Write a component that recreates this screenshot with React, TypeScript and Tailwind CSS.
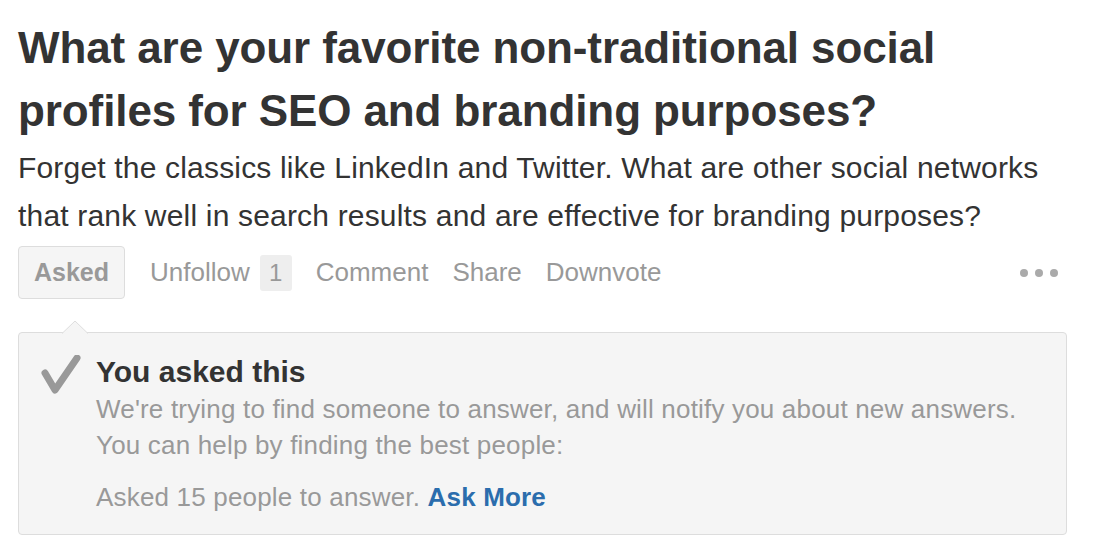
export default function App() {
  return (
    <div className="min-h-screen bg-white pl-[18px] pr-[29px] pt-[16px] font-['Liberation_Sans',Arial,sans-serif] text-[#333]">
      {/* Question */}
      <h1 className="text-[44px] font-bold leading-[63px] tracking-[-0.1px]">
        What are your favorite non-traditional social profiles for SEO and branding purposes?
      </h1>
      <p className="mt-[2px] text-[30px] leading-[48px] tracking-[0.18px]">
        Forget the classics like LinkedIn and Twitter. What are other social networks that rank well in search results and are effective for branding purposes?
      </p>

      {/* Actions */}
      <div className="mt-[6px] flex items-center text-[26px] text-[#999]">
        <button className="flex h-[53px] w-[107px] items-center justify-center rounded-[4px] border border-[#ddd] bg-[#f5f5f5] text-[25px] font-bold">
          Asked
        </button>
        <div className="ml-[25px] flex items-center gap-[10px]">
          <span>Unfollow</span>
          <span className="flex h-[36px] w-[32px] items-center justify-center rounded-[3px] bg-[#eee] text-[24px]">1</span>
        </div>
        <span className="ml-[24px]">Comment</span>
        <span className="ml-[24px]">Share</span>
        <span className="ml-[24px]">Downvote</span>
        <div className="ml-auto mr-[9px] flex items-center gap-[7px]">
          <span className="h-[8px] w-[8px] rounded-full bg-[#aaa]" />
          <span className="h-[8px] w-[8px] rounded-full bg-[#aaa]" />
          <span className="h-[8px] w-[8px] rounded-full bg-[#aaa]" />
        </div>
      </div>

      {/* Asked panel */}
      <div className="relative mt-[33px] flex rounded-[4px] border border-[#ddd] bg-[#f5f5f5] pb-[19px] pt-[21px]">
        <svg className="absolute left-[43px] top-[-13px]" width="26" height="14" viewBox="0 0 26 14">
          <path d="M0 13.5 L13 1 L26 13.5" fill="#f5f5f5" stroke="#ddd" strokeWidth="1" />
        </svg>
        <div className="w-[77px] shrink-0">
          <svg className="ml-[22px] mt-[1px]" width="40" height="40" viewBox="0 0 40 40">
            <polyline points="4,18 14,35 36,3" fill="none" stroke="#999" strokeWidth="7" strokeLinecap="round" strokeLinejoin="round" />
          </svg>
        </div>
        <div className="text-[26px] leading-[36px] tracking-[0.18px] text-[#999]">
          <div className="text-[30px] font-bold tracking-normal text-[#333]">You asked this</div>
          <p className="mt-[1px]">
            We're trying to find someone to answer, and will notify you about new answers.
            <br />
            You can help by finding the best people:
          </p>
          <p className="mt-[16px]">
            Asked 15 people to answer. <a className="font-bold text-[#2b6dad]">Ask More</a>
          </p>
        </div>
      </div>
    </div>
  )
}
